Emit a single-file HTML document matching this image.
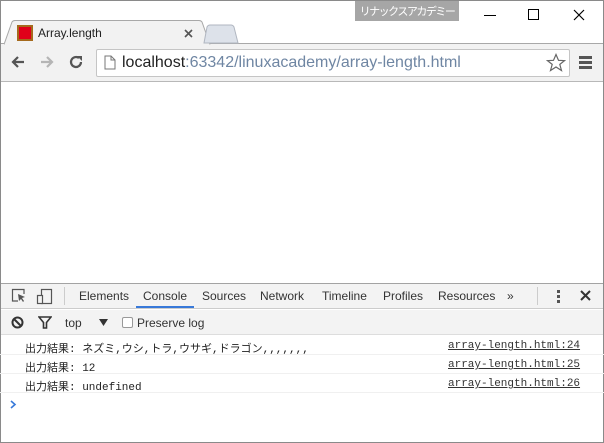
<!DOCTYPE html>
<html><head><meta charset="utf-8"><style>
*{margin:0;padding:0;box-sizing:border-box}
body{width:604px;height:443px;overflow:hidden;background:#fff;font-family:"Liberation Sans","Noto Sans CJK JP",sans-serif;position:relative}
.frame{position:absolute;left:0;top:0;width:604px;height:443px;border:1px solid #8a8a8a}
.abs{position:absolute}
.mono{font-family:"Liberation Mono","Noto Sans CJK JP",monospace}
</style></head><body>
<div class="frame"></div>
<div class="abs" style="left:355px;top:1px;width:104px;height:20px;background:#a6a6a6;color:#fff;font-size:11px;line-height:20px;text-align:center;font-family:'Noto Sans CJK JP',sans-serif;letter-spacing:-1.5px;white-space:nowrap;overflow:hidden">リナックスアカデミー</div>
<div class="abs" style="left:484px;top:15px;width:12px;height:1px;background:#000"></div>
<div class="abs" style="left:528px;top:9px;width:11px;height:11px;border:1px solid #000"></div>
<svg class="abs" style="left:573px;top:9px" width="12" height="12"><path d="M1 1L11 11M11 1L1 11" stroke="#000" stroke-width="1.2"/></svg>
<div class="abs" style="left:1px;top:43px;width:602px;height:1px;background:#a8a8a8"></div>
<div class="abs" style="left:1px;top:44px;width:602px;height:38px;background:#f2f2f2;border-bottom:1px solid #b8b8b8"></div>
<svg class="abs" style="left:4px;top:20px" width="210" height="25"><path d="M0 24.5L8 2Q9 0.5 11 0.5H195Q197 0.5 198 2L206 24.5" fill="#f2f2f2" stroke="#a8a8a8"/></svg>
<div class="abs" style="left:17px;top:25px;width:16px;height:16px;background:#a56a1d;padding:2px"><div style="width:12px;height:12px;background:#e0001a"></div></div>
<div class="abs" style="left:38px;top:25px;font-size:12px;color:#222;line-height:16px">Array.length</div>
<svg class="abs" style="left:184px;top:29px" width="9" height="9"><path d="M1 1L8 8M8 1L1 8" stroke="#555" stroke-width="1.6"/></svg>
<svg class="abs" style="left:203px;top:24px" width="36" height="20"><path d="M1 19L4 3Q5 1 7 1H28Q30 1 31 3L35 19Z" fill="#dde2ea" stroke="#b0b6c0"/></svg>
<svg class="abs" style="left:10px;top:54px" width="16" height="16"><path d="M14 8H3M8 3L3 8L8 13" stroke="#555" stroke-width="2.2" fill="none"/></svg>
<svg class="abs" style="left:39px;top:54px" width="16" height="16"><path d="M2 8H13M8 3L13 8L8 13" stroke="#b5b5b5" stroke-width="2.2" fill="none"/></svg>
<svg class="abs" style="left:68px;top:54px" width="16" height="16"><path d="M13 8A5 5 0 1 1 11 4" stroke="#555" stroke-width="2.2" fill="none"/><path d="M9 2H14V7Z" fill="#555"/></svg>
<div class="abs" style="left:96px;top:49px;width:474px;height:28px;background:#fff;border:1px solid #c5c5c5;border-radius:2px"></div>
<svg class="abs" style="left:104px;top:55px" width="12" height="15"><path d="M1 1H7L11 5V14H1Z M7 1V5H11" stroke="#777" fill="#fff"/></svg>
<div class="abs" style="left:122px;top:54px;font-size:16px;line-height:18px;color:#222">localhost<span style="color:#6f86a3">:63342/linuxacademy/array-length.html</span></div>
<svg class="abs" style="left:546px;top:53px" width="20" height="20"><path d="M10 1.5L12.5 7.3L18.6 7.6L13.8 11.4L15.5 17.5L10 14L4.5 17.5L6.2 11.4L1.4 7.6L7.5 7.3Z" fill="none" stroke="#666" stroke-width="1.2"/></svg>
<div class="abs" style="left:579px;top:56px;width:13px;height:3px;background:#555;box-shadow:0 5px 0 #555,0 10px 0 #555"></div>
<div class="abs" style="left:1px;top:283px;width:602px;height:1px;background:#a3a3a3"></div>
<div class="abs" style="left:1px;top:284px;width:602px;height:25px;background:#f3f3f3;border-bottom:1px solid #ccc"></div>
<svg class="abs" style="left:11px;top:288px" width="16" height="16"><path d="M7 13H1.5V1.5H13V6" stroke="#555" fill="none" stroke-width="1.2"/><path d="M7 6L14 9L11 10L13 13L12 14L10 11L8 13Z" fill="#555"/></svg>
<svg class="abs" style="left:36px;top:288px" width="18" height="18"><rect x="5.5" y="1.5" width="10" height="14" stroke="#555" fill="none" stroke-width="1.2"/><rect x="1.5" y="7.5" width="5" height="8" stroke="#555" fill="#f3f3f3" stroke-width="1.2"/></svg>
<div class="abs" style="left:64px;top:287px;width:1px;height:18px;background:#ccc"></div>
<div class="abs" style="top:289px;left:0;font-size:12px;color:#333;line-height:14px;white-space:nowrap">
<span class="abs" style="left:79px">Elements</span>
<span class="abs" style="left:143px">Console</span>
<span class="abs" style="left:202px">Sources</span>
<span class="abs" style="left:260px">Network</span>
<span class="abs" style="left:322px">Timeline</span>
<span class="abs" style="left:383px">Profiles</span>
<span class="abs" style="left:438px">Resources</span>
<span class="abs" style="left:507px">»</span>
</div>
<div class="abs" style="left:136px;top:306px;width:58px;height:2px;background:#3879d9"></div>
<div class="abs" style="left:537px;top:287px;width:1px;height:18px;background:#ccc"></div>
<div class="abs" style="left:557px;top:290px;width:3px;height:3px;background:#555;box-shadow:0 5px 0 #555,0 10px 0 #555"></div>
<svg class="abs" style="left:580px;top:290px" width="11" height="11"><path d="M1 1L10 10M10 1L1 10" stroke="#333" stroke-width="2"/></svg>
<div class="abs" style="left:1px;top:310px;width:602px;height:25px;background:#f3f3f3;border-bottom:1px solid #ddd"></div>
<svg class="abs" style="left:11px;top:316px" width="13" height="13"><circle cx="6.5" cy="6.5" r="5" stroke="#333" stroke-width="2" fill="none"/><path d="M3 3L10 10" stroke="#333" stroke-width="2"/></svg>
<svg class="abs" style="left:38px;top:316px" width="14" height="14"><path d="M1 1H13L8.5 6.5V12H5.5V6.5Z" fill="none" stroke="#333" stroke-width="1.6"/></svg>
<div class="abs" style="left:65px;top:316px;font-size:12px;color:#333;line-height:14px">top</div>
<svg class="abs" style="left:99px;top:319px" width="9" height="7"><path d="M0 0H9L4.5 7Z" fill="#333"/></svg>
<div class="abs" style="left:122px;top:317px;width:11px;height:11px;border:1px solid #999;border-radius:2px;background:#fff"></div>
<div class="abs" style="left:137px;top:316px;font-size:12px;color:#333;line-height:14px">Preserve log</div>
<div class="abs mono" style="left:0;top:336px;width:604px;font-size:11px;color:#222">
<div style="height:19px;border-bottom:1px solid #f0f0f0;position:relative"><span class="abs" style="left:25px;top:4px">出力結果: ネズミ,ウシ,トラ,ウサギ,ドラゴン,,,,,,,</span><span class="abs" style="left:448px;top:4px;text-decoration:underline;color:#333">array-length.html:24</span></div>
<div style="height:19px;border-bottom:1px solid #f0f0f0;position:relative"><span class="abs" style="left:25px;top:4px">出力結果: 12</span><span class="abs" style="left:448px;top:4px;text-decoration:underline;color:#333">array-length.html:25</span></div>
<div style="height:19px;border-bottom:1px solid #f0f0f0;position:relative"><span class="abs" style="left:25px;top:4px">出力結果: undefined</span><span class="abs" style="left:448px;top:4px;text-decoration:underline;color:#333">array-length.html:26</span></div>
</div>
<svg class="abs" style="left:10px;top:400px" width="7" height="9"><path d="M1 1L5 4.5L1 8" stroke="#3879d9" stroke-width="1.6" fill="none"/></svg>
</body></html>
